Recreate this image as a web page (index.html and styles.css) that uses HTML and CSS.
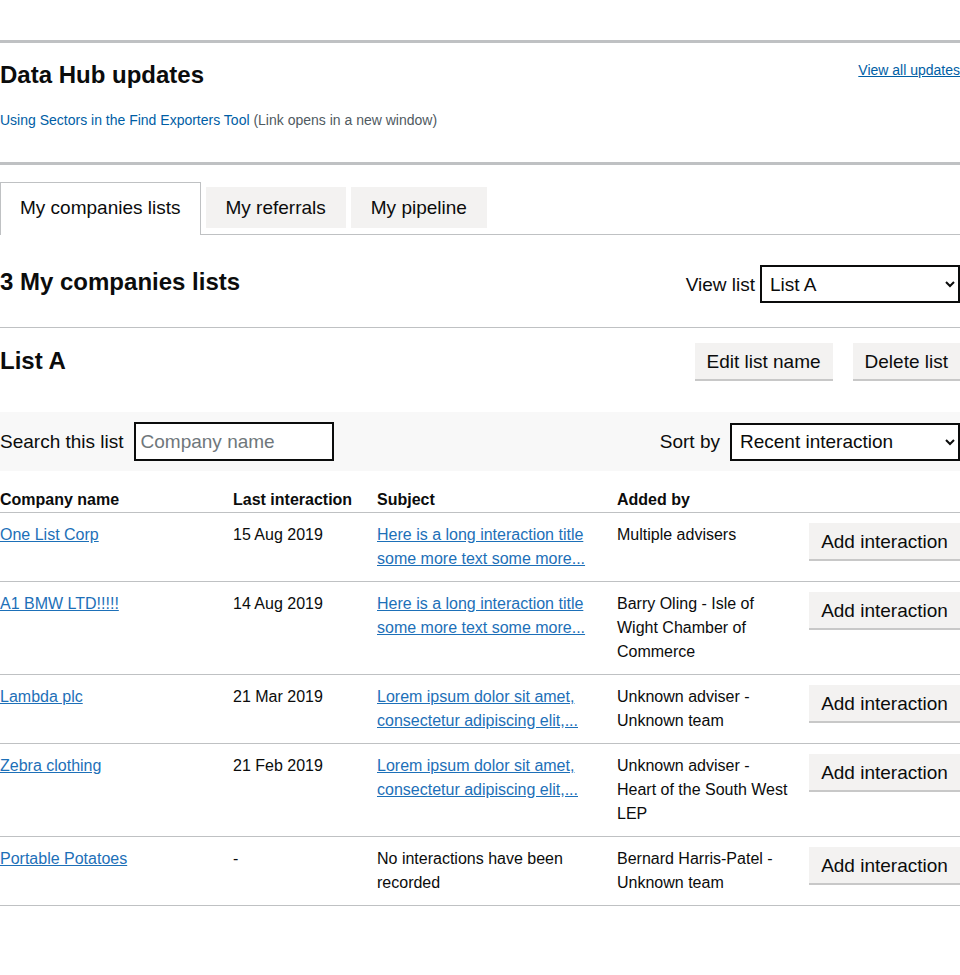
FILE: index.html
```html
<!DOCTYPE html>
<html lang="en">
<head>
<meta charset="utf-8">
<title>Data Hub dashboard</title>
<link rel="stylesheet" href="styles.css">
</head>
<body>
<main class="page">
  <section class="updates">
    <div class="updates-head">
      <h2 class="heading-m">Data Hub updates</h2>
      <a class="link-small" href="#">View all updates</a>
    </div>
    <p class="update-item"><a class="link-plain" href="#">Using Sectors in the Find Exporters Tool</a> <span class="hint">(Link opens in a new window)</span></p>
  </section>

  <ul class="tabs">
    <li class="tab tab-selected">My companies lists</li>
    <li class="tab">My referrals</li>
    <li class="tab">My pipeline</li>
  </ul>

  <div class="lists-head">
    <h2 class="heading-m heading-lists">3 My companies lists</h2>
    <label class="field">
      <span class="label">View list</span>
      <select class="select select-list"><option>List A</option><option>List B</option><option>List C</option></select>
    </label>
  </div>

  <hr class="rule">

  <div class="list-head">
    <h2 class="heading-m">List A</h2>
    <div class="actions">
      <button class="button">Edit list name</button>
      <button class="button">Delete list</button>
    </div>
  </div>

  <div class="filters">
    <label class="field">
      <span class="label">Search this list</span>
      <input class="input" type="text" placeholder="Company name">
    </label>
    <label class="field">
      <span class="label">Sort by</span>
      <select class="select select-sort"><option>Recent interaction</option></select>
    </label>
  </div>

  <table class="table">
    <colgroup>
      <col class="c1"><col class="c2"><col class="c3"><col class="c4"><col class="c5">
    </colgroup>
    <thead>
      <tr><th>Company name</th><th>Last interaction</th><th>Subject</th><th>Added by</th><th></th></tr>
    </thead>
    <tbody>
      <tr>
        <td><a class="link" href="#">One List Corp</a></td>
        <td>15 Aug 2019</td>
        <td><a class="link" href="#">Here is a long interaction title some more text some more...</a></td>
        <td>Multiple advisers</td>
        <td class="btn-cell"><button class="button">Add interaction</button></td>
      </tr>
      <tr>
        <td><a class="link" href="#">A1 BMW LTD!!!!!</a></td>
        <td>14 Aug 2019</td>
        <td><a class="link" href="#">Here is a long interaction title some more text some more...</a></td>
        <td>Barry Oling - Isle of Wight Chamber of Commerce</td>
        <td class="btn-cell"><button class="button">Add interaction</button></td>
      </tr>
      <tr>
        <td><a class="link" href="#">Lambda plc</a></td>
        <td>21 Mar 2019</td>
        <td><a class="link" href="#">Lorem ipsum dolor sit amet, consectetur adipiscing elit,...</a></td>
        <td>Unknown adviser - Unknown team</td>
        <td class="btn-cell"><button class="button">Add interaction</button></td>
      </tr>
      <tr>
        <td><a class="link" href="#">Zebra clothing</a></td>
        <td>21 Feb 2019</td>
        <td><a class="link" href="#">Lorem ipsum dolor sit amet, consectetur adipiscing elit,...</a></td>
        <td>Unknown adviser - Heart of the South West LEP</td>
        <td class="btn-cell"><button class="button">Add interaction</button></td>
      </tr>
      <tr>
        <td><a class="link" href="#">Portable Potatoes</a></td>
        <td>-</td>
        <td>No interactions have been recorded</td>
        <td>Bernard Harris-Patel - Unknown team</td>
        <td class="btn-cell"><button class="button">Add interaction</button></td>
      </tr>
    </tbody>
  </table>
</main>
</body>
</html>
```

FILE: styles.css
```css
html, body {
  margin: 0;
  padding: 0;
  background: #ffffff;
}

body {
  font-family: "Liberation Sans", Arial, sans-serif;
  color: #0b0c0c;
  font-size: 16px;
  line-height: 24px;
}

.page {
  width: 960px;
  padding-top: 40px;
}

.heading-m {
  margin: 0;
  font-size: 24px;
  line-height: 30px;
  font-weight: 700;
}

.updates {
  border-top: 3px solid #bfc1c3;
  border-bottom: 3px solid #bfc1c3;
  padding-top: 17px;
  padding-bottom: 32px;
}

.updates-head {
  display: flex;
  justify-content: space-between;
  align-items: flex-start;
}

.link-small {
  font-size: 14px;
  line-height: 20px;
  color: #005ea5;
  text-decoration: underline;
}

.update-item {
  margin: 20px 0 0;
  font-size: 14px;
  line-height: 20px;
}

.link-plain {
  color: #005ea5;
  text-decoration: none;
}

.hint {
  color: #505a5f;
}

.tabs {
  list-style: none;
  margin: 17px 0 0;
  padding: 0;
  display: flex;
  align-items: flex-start;
  gap: 5px;
  border-bottom: 1px solid #bfc1c3;
  font-size: 19px;
  line-height: 25px;
}

.tab {
  margin-top: 5px;
  padding: 8px 20px;
  background: #f3f2f1;
}

.tab-selected {
  margin-top: 0;
  margin-bottom: -1px;
  padding: 12px 19px 15px;
  background: #ffffff;
  border: 1px solid #bfc1c3;
  border-bottom: 0;
}

.lists-head,
.list-head {
  display: flex;
  justify-content: space-between;
  align-items: center;
}

.lists-head {
  margin-top: 30px;
}

.heading-lists {
  margin-bottom: 4px;
}

.field {
  display: flex;
  align-items: center;
  gap: 10px;
}

.lists-head .field {
  gap: 5px;
}

.label {
  font-size: 19px;
  line-height: 25px;
}

.select {
  font-family: "Liberation Sans", Arial, sans-serif;
  font-size: 19px;
  color: #0b0c0c;
  height: 38px;
  border: 2px solid #0b0c0c;
  border-radius: 0;
  background: #ffffff;
  padding: 0 5px 0 4px;
  margin: 0;
}

.select-list {
  width: 200px;
}

.select-sort {
  width: 230px;
}

.rule {
  margin: 24px 0 0;
  border: 0;
  border-top: 1px solid #bfc1c3;
  height: 0;
}

.list-head {
  margin-top: 15px;
}

.actions {
  display: flex;
  gap: 20px;
}

.button {
  font-family: "Liberation Sans", Arial, sans-serif;
  font-size: 19px;
  line-height: 24px;
  color: #0b0c0c;
  background: #f3f2f1;
  border: 0;
  border-radius: 0;
  padding: 7px 12px 5px;
  margin: 0;
  box-shadow: 0 2px 0 #c8c8c8;
  cursor: pointer;
}

.filters {
  margin-top: 33px;
  background: #f8f8f8;
  padding: 10px 0;
  display: flex;
  justify-content: space-between;
  align-items: center;
}

.input {
  font-family: "Liberation Sans", Arial, sans-serif;
  font-size: 19px;
  color: #0b0c0c;
  width: 200px;
  height: 39px;
  box-sizing: border-box;
  border: 2px solid #0b0c0c;
  border-radius: 0;
  padding: 0 5px;
  margin: 0;
  background: #ffffff;
}

.input::placeholder {
  color: #6f777b;
}

.table {
  margin-top: 16px;
  width: 960px;
  border-collapse: collapse;
  table-layout: fixed;
}

.c1 { width: 233px; }
.c2 { width: 144px; }
.c3 { width: 240px; }
.c4 { width: 192px; }
.c5 { width: 151px; }

.table th {
  text-align: left;
  font-weight: 700;
  font-size: 16px;
  line-height: 24px;
  padding: 1px 20px 0 0;
  border-bottom: 1px solid #bfc1c3;
  vertical-align: top;
}

.table td {
  padding: 10px 20px 10px 0;
  font-size: 16px;
  line-height: 24px;
  border-bottom: 1px solid #bfc1c3;
  vertical-align: top;
}

.table td.btn-cell {
  padding-right: 0;
  text-align: right;
}

.btn-cell .button {
  width: 151px;
  padding-left: 0;
  padding-right: 0;
}

.link {
  color: #1d70b8;
  text-decoration: underline;
}
```
